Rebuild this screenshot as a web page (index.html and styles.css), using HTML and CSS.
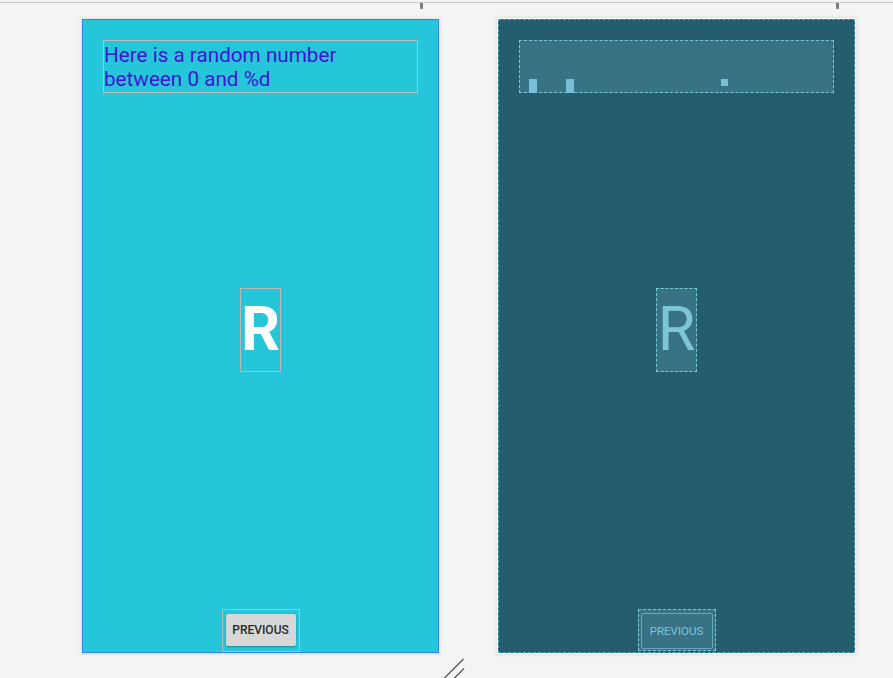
FILE: index.html
```html
<!DOCTYPE html>
<html>
<head>
<meta charset="utf-8">
<link rel="stylesheet" href="styles.css">
</head>
<body>
<div class="canvas">
  <div class="ruler">
    <span class="tick tick-a"></span>
    <span class="tick tick-b"></span>
  </div>
  <div class="screens">
    <div class="screen design">
      <div class="textbox">Here is a random number<br>between 0 and %d</div>
      <div class="rbox">R</div>
      <div class="btnwrap"><div class="btn">PREVIOUS</div></div>
    </div>
    <div class="screen blueprint">
      <div class="textbox bp-text">
        <span class="bar bar1"></span>
        <span class="bar bar2"></span>
        <span class="dot"></span>
      </div>
      <div class="rbox bp-r">R</div>
      <div class="btnwrap bp-wrap"><div class="btn bp-btn">PREVIOUS</div></div>
    </div>
  </div>
  <svg class="resize" width="26" height="24" viewBox="0 0 26 24">
    <line x1="3" y1="23.5" x2="23.5" y2="3" stroke="#555" stroke-width="1.3"/>
    <line x1="13" y1="23.5" x2="24" y2="12.5" stroke="#555" stroke-width="1.3"/>
  </svg>
</div>
</body>
</html>
```
FILE: styles.css
```css
html, body {
  margin: 0;
  padding: 0;
  background: #f4f4f4;
  width: 893px;
  height: 678px;
  overflow: hidden;
  font-family: Roboto, "Liberation Sans", sans-serif;
}
.canvas {
  position: relative;
  width: 893px;
  height: 678px;
}
.ruler {
  position: relative;
  height: 2px;
  margin-top: 2px;
  border-top: 1px solid #c9c9c9;
}
.tick {
  position: absolute;
  top: 0;
  width: 3px;
  height: 6px;
  background: #7a7a7a;
  border-radius: 0 0 1px 1px;
}
.tick-a { left: 420px; }
.tick-b { left: 836px; }
.screens {
  display: flex;
  gap: 59px;
  padding-left: 82px;
  margin-top: 14px;
}
.screen {
  box-sizing: border-box;
  width: 357px;
  height: 634px;
  display: flex;
  flex-direction: column;
  align-items: center;
  padding: 20px 20px 0;
}
.design {
  background: #26c6da;
  border: 1px solid #3384f0;
  box-shadow: 0 1px 0 1px #dfe6ee, 0 0 3px 1px #e2e2e2;
}
.blueprint {
  background: #235d6e;
  border: 1px dashed #5aa7bb;
  outline: 1px solid #ffffff;
  box-shadow: 0 0 3px 2px #e0e0e0;
}
.textbox {
  box-sizing: border-box;
  align-self: stretch;
  height: 53px;
  border: 1px solid #bcbcbc;
  color: #3b17cf;
  font-size: 20.7px;
  line-height: 24px;
  padding: 2px 0 0 0;
}
.rbox {
  box-sizing: border-box;
  width: 41px;
  height: 84px;
  margin-top: 195px;
  border: 1px solid #b9b9b9;
  color: #ffffff;
  font-weight: 700;
  font-size: 61px;
  line-height: 80px;
  text-align: center;
}
.btnwrap {
  box-sizing: border-box;
  margin-top: auto;
  margin-bottom: 0;
  width: 78px;
  height: 43px;
  border: 1px solid #b9b9b9;
  display: flex;
  justify-content: center;
  padding-top: 4px;
}
.btn {
  box-sizing: border-box;
  width: 70px;
  height: 32px;
  background: #d7d7d7;
  border-radius: 2px;
  box-shadow: 0 1px 2px rgba(0,0,0,0.3);
  color: #2a2a2a;
  font-size: 12px;
  font-weight: 500;
  line-height: 33px;
  text-align: center;
}
.bp-text {
  position: relative;
  background: #387385;
  border: 1px dashed #7cc6da;
}
.bar {
  position: absolute;
  bottom: -1px;
  width: 8px;
  height: 14px;
  background: #78c0d5;
}
.bar1 { left: 9px; }
.bar2 { left: 46px; }
.dot {
  position: absolute;
  left: 201px;
  top: 38px;
  width: 7px;
  height: 7px;
  background: #78c0d5;
}
.bp-r {
  background: #387385;
  border: 1px dashed #7cc6da;
  color: #7ec5d9;
  font-weight: 400;
}
.bp-wrap {
  border: 1px dashed #7cc6da;
  background: #387385;
  padding: 3px 2px 1px;
  height: 42px;
  margin-bottom: 1px;
}
.bp-btn {
  width: 73px;
  height: 36px;
  background: #387385;
  border: 1px solid #66a8ba;
  border-radius: 2px;
  box-shadow: none;
  color: #7ec5d9;
  font-size: 11.5px;
  font-weight: 400;
  line-height: 34px;
}
.resize {
  position: absolute;
  left: 440px;
  top: 654px;
}
```
